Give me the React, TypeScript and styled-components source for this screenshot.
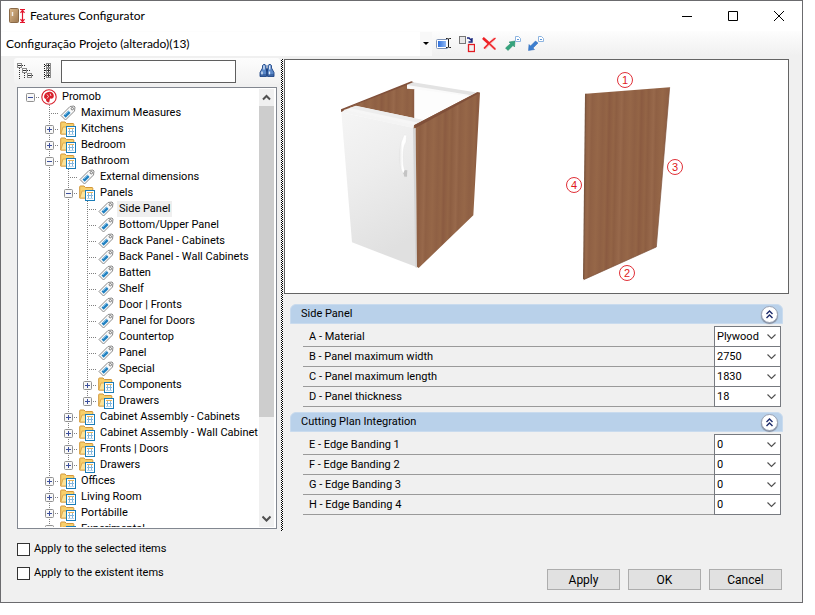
import React from "react";
import styled, { createGlobalStyle, css } from "styled-components";

const GlobalStyle = createGlobalStyle`
  *, *::before, *::after { box-sizing: border-box; }
  body {
    margin: 0;
    background: #fff;
    color: #000;
    font: 11px/16px Roboto, "Liberation Sans", sans-serif;
  }
  button, input, select { font: inherit; color: inherit; }
  svg { display: block; }
`;

const line = "#777a80";
const captionFont = `12px/16px Lato, "Open Sans", sans-serif`;
const dotsV = "repeating-linear-gradient(to bottom, #808080 0 1px, transparent 1px 2px)";
const dotsH = "repeating-linear-gradient(to right, #808080 0 1px, transparent 1px 2px)";

const Dialog = styled.main`
  display: flex;
  flex-direction: column;
  height: calc(100vh - 12px);
  min-height: 480px;
  margin-right: 12px;
  background: #f0f0f0;
  border: 1px solid #6b6b6e;
`;

const TitleBar = styled.header`
  display: flex;
  flex: none;
  align-items: center;
  height: 30px;
  padding-left: 8px;
  background: #fff;
`;

const Title = styled.h1`
  flex: 1;
  margin: 0 0 0 4px;
  font: ${captionFont};
`;

const WindowButton = styled.button`
  display: grid;
  place-items: center;
  width: 46px;
  height: 28px;
  padding: 0;
  border: 0;
  background: none;
`;

const Toolbar = styled.div`
  display: flex;
  flex: none;
  align-items: center;
  gap: 7px;
  height: 25px;
  background: linear-gradient(#fdfdfd, #f0f0f0);
`;

const ProjectPicker = styled.label`
  display: grid;
  flex: 0 1 431px;
  align-items: center;
  height: 24px;
  margin-right: -3px;
  background: #fff;
`;

const ProjectSelect = styled.select`
  grid-area: 1 / 1;
  width: 100%;
  height: 24px;
  padding: 0 16px 0 5px;
  border: 0;
  appearance: none;
  background: none;
  font: ${captionFont};
`;

const PickerArrow = styled.span`
  display: grid;
  grid-area: 1 / 1;
  place-items: center;
  justify-self: end;
  width: 12px;
  height: 24px;
  background: #f8f8f8;
  pointer-events: none;
`;

const IconButton = styled.button`
  display: grid;
  place-items: center;
  flex: none;
  width: 16px;
  height: 18px;
  padding: 0;
  border: 0;
  background: none;
`;

const Body = styled.div`
  display: flex;
  flex: 1;
  min-height: 0;
  padding-right: 13px;
`;

const Sidebar = styled.aside`
  display: flex;
  flex: none;
  flex-direction: column;
  width: 280px;
  padding: 2px 4px 2px 16px;
`;

const SearchBar = styled.div`
  display: flex;
  flex: none;
  align-items: center;
  gap: 6px;
  height: 26px;
  margin: 0 -3px 3px;
  padding: 0 5px 0 3px;
  border-radius: 3px;
  background: linear-gradient(#fdfdfd, #f2f2f2);
`;

const SearchInput = styled.input`
  flex: 1;
  min-width: 0;
  height: 23px;
  margin-right: 17px;
  padding: 0 4px;
  border: 1px solid #5f5f5f;
  background: #fff;
`;

const TreeBox = styled.div`
  display: flex;
  flex: 1;
  min-height: 0;
  padding: 1px 2px 1px 3px;
  border: 1px solid #828790;
  background: #fff;
`;

const TreeList = styled.ul`
  flex: 1;
  min-width: 0;
  margin: 0;
  padding: 0;
  overflow: hidden;
  list-style: none;
`;

const TreeRow = styled.li`
  display: flex;
  align-items: center;
  height: 16px;
  white-space: nowrap;
`;

const Guide = styled.span<{ $line: boolean }>`
  flex: none;
  width: 19px;
  height: 16px;
  ${(p) => p.$line && css`background: ${dotsV} 9px 0 / 1px 16px no-repeat;`}
`;

const Branch = styled.span<{ $line: boolean; $last: boolean }>`
  display: grid;
  place-items: center;
  flex: none;
  width: 19px;
  height: 16px;
  background:
    ${dotsH} 9px 8px / 10px 1px no-repeat,
    ${dotsV} 9px 0 / ${(p) => (p.$line ? 1 : 0)}px ${(p) => (p.$last ? 8 : 16)}px no-repeat;
`;

const Expander = styled.button`
  width: 9px;
  height: 9px;
  padding: 0;
  border: 0;
  background: none;
`;

const TreeIcon = styled.span`
  flex: none;
  width: 16px;
  margin: 0 3px 0 1px;
`;

const TreeLabel = styled.span<{ $selected: boolean }>`
  padding: 0 2px;
  background: ${(p) => (p.$selected ? "#efefef" : "none")};
`;

const ScrollBar = styled.div`
  display: flex;
  flex: none;
  flex-direction: column;
  width: 15px;
  background: #f0f0f0;
`;

const ScrollButton = styled.button`
  display: grid;
  place-items: center;
  flex: none;
  width: 15px;
  height: 17px;
  padding: 0;
  border: 0;
  background: none;
`;

const ScrollTrack = styled.div`
  flex: 1;
`;

const ScrollThumb = styled.div`
  height: 77%;
  background: #cdcdcd;
`;

const Splitter = styled.div`
  flex: none;
  width: 2px;
  margin: 3px 1px 0 0;
  background: repeating-conic-gradient(#000 0 25%, #fff 0 50%) 0 0 / 2px 2px;
`;

const Content = styled.section`
  flex: 1;
  min-width: 0;
  padding-top: 3px;
`;

const Preview = styled.figure`
  margin: 0 0 10px;
  border: 1px solid #646464;
  background: #fff;
  overflow: hidden;
`;

const Group = styled.section`
  margin: 0 6px 5px;
`;

const GroupHeader = styled.header`
  display: flex;
  align-items: center;
  justify-content: space-between;
  height: 20px;
  margin-bottom: 2px;
  padding: 0 4px 0 10px;
  border: 1px solid #c9dbee;
  border-radius: 6px 6px 0 0;
  background: #b9d1ea;
`;

const GroupTitle = styled.h2`
  margin: 0;
  font: inherit;
`;

const CollapseButton = styled.button`
  display: grid;
  place-items: center;
  width: 17px;
  height: 17px;
  padding: 0;
  border: 1px solid #9aa3b5;
  border-radius: 50%;
  background: #fff;
  box-shadow: 0 1px 1px #7d8799;
`;

const Fields = styled.div`
  margin: 0 2px 0 13px;
`;

const Field = styled.div`
  display: flex;
  align-items: stretch;
  height: 20px;
  &:first-child { height: 21px; }
`;

const FieldLabel = styled.label`
  flex: 1;
  align-content: center;
  padding: 1px 0 0 6px;
  border-bottom: 1px solid #9a9a9a;
`;

const ValueBox = styled.span`
  display: grid;
  flex: none;
  align-items: center;
  width: 67px;
  border: solid ${line};
  border-width: 0 1px 1px;
  background: #fff;
  ${Field}:first-child & { border-top-width: 1px; }
`;

const ValueSelect = styled.select`
  grid-area: 1 / 1;
  width: 100%;
  height: 19px;
  padding: 0 0 0 2px;
  border: 0;
  appearance: none;
  background: none;
`;

const ValueArrow = styled.span`
  grid-area: 1 / 1;
  justify-self: end;
  margin-right: 4px;
  pointer-events: none;
`;

const Footer = styled.footer`
  display: flex;
  flex: none;
  justify-content: space-between;
  padding: 6px 20px 12px 16px;
`;

const Options = styled.div`
  display: flex;
  flex-direction: column;
  padding-bottom: 5px;
`;

const Option = styled.label`
  display: flex;
  align-items: center;
  gap: 4px;
  height: 24px;
`;

const CheckBox = styled.input`
  width: 13px;
  height: 13px;
  margin: 0;
  border: 1px solid #333;
  appearance: none;
  background: #fff;
  &:checked { box-shadow: inset 0 0 0 2px #fff; background: #333; }
`;

const Actions = styled.div`
  display: flex;
  align-items: flex-end;
  gap: 8px;
`;

const ActionButton = styled.button`
  width: 73px;
  height: 21px;
  padding: 0;
  border: 1px solid #adadad;
  background: #e1e1e1;
  font-size: 12px;
`;

const AppIcon = () => (
  <svg width="17" height="18" viewBox="0 0 17 18" aria-hidden="true">
    <defs>
      <linearGradient id="door" x2="1" y2="1">
        <stop offset="0" stopColor="#dcb98c" />
        <stop offset="1" stopColor="#9c7850" />
      </linearGradient>
    </defs>
    <rect x=".5" y="1.5" width="9" height="14" rx="1" fill="url(#door)" stroke="#8a6a48" />
    <path d="M3.5 5v4" stroke="#f2eee8" strokeWidth="1.4" />
    <path d="M11 2.500h5M11 15.500h5M13.500 3v12M11.500 5.800 13.500 3.200l2 2.600M11.500 12.200 13.500 14.800l2-2.600" fill="none" stroke="#e3142c" strokeWidth="1.2" />
  </svg>
);

const RenameIcon = () => (
  <svg width="16" height="16" viewBox="0 0 16 16" aria-hidden="true">
    <defs>
      <linearGradient id="rename" x2="1">
        <stop offset="0" stopColor="#2f70dc" />
        <stop offset="1" stopColor="#8fb8f4" />
      </linearGradient>
    </defs>
    <path d="M11.500 3.500H1.500q-1 0-1 1v7q0 1 1 1h10" fill="#fff" stroke="#7d92b5" />
    <rect x="2" y="5" width="8" height="6" fill="url(#rename)" />
    <path d="M10 2.500h1.500q1 0 1 1 0-1 1-1H15M10 11.500h1.500q1 0 1-1 0 1 1 1H15M12.500 3v8" fill="none" stroke="#222" />
  </svg>
);

const ReplaceIcon = () => (
  <svg width="16" height="18" viewBox="0 0 16 18" aria-hidden="true">
    <rect x=".5" y="1.500" width="6" height="7" fill="#e8e8e8" stroke="#777" />
    <path d="M8 3h2l2.500 2.500M13 3v4H9.500" fill="none" stroke="#17257c" strokeWidth="1.400" />
    <rect x="9.500" y="9.500" width="6" height="7" fill="#f1f1f1" stroke="#e11b22" strokeWidth="1.300" />
  </svg>
);

const DeleteIcon = () => (
  <svg width="16" height="16" viewBox="0 0 16 16" aria-hidden="true">
    <path d="M2 3 13 13M12.500 2.500 2.500 12.500" stroke="#f9b4b4" strokeWidth="2.500" />
    <path d="M1 2Q7 7 13.500 13.500" fill="none" stroke="#ee2126" strokeWidth="1.500" />
    <path d="M13.500 2Q7 6.500 2 12.500" fill="none" stroke="#ee2126" strokeWidth="1.400" />
    <path d="M1 2 7 7.500" stroke="#ee2126" strokeWidth="2.500" />
  </svg>
);

const PageMark = () => (
  <>
    <path d="M10.500 .5h3l2 2v3h-5z" fill="#fff" stroke="#8db4e0" />
    <path d="M12 3.500h2" stroke="#5f96d4" />
  </>
);

const ExportIcon = () => (
  <svg width="16" height="16" viewBox="0 0 16 16" aria-hidden="true">
    <path d="M.5 12 5.500 7.500 4 6 10 5 9.500 11 8 9.500 3 14.500z" fill="#34a47c" stroke="#238764" strokeWidth=".5" />
    <PageMark />
  </svg>
);

const ImportIcon = () => (
  <svg width="16" height="16" viewBox="0 0 16 16" aria-hidden="true">
    <path d="M.5 14.500 1 8.500 2.500 10 7.500 5 10 7 5 12 6.500 13.500z" fill="#3c7fd0" stroke="#2c67b6" strokeWidth=".5" />
    <PageMark />
  </svg>
);

const MiniBox = ({ x, y, plus }: { x: number; y: number; plus?: boolean }) => (
  <g>
    <rect x={x + 0.5} y={y + 0.5} width="4" height="4" fill="#fff" stroke="#8b8b8b" />
    <path d={`M${x + 1} ${y + 2.5}h3${plus ? `M${x + 2.5} ${y + 1}v3` : ""}`} stroke="#333" />
  </g>
);

const CollapseTreeIcon = () => (
  <svg width="16" height="18" viewBox="0 0 16 18" aria-hidden="true">
    <path d="M2.500 6v11M5 3.500h3M7.500 11v6M10 8.500h3M13 13.500h3" stroke="#333" strokeDasharray="1 1" />
    <MiniBox x={0} y={1} />
    <MiniBox x={5} y={6} />
    <MiniBox x={10} y={11} />
  </svg>
);

const ExpandTreeIcon = () => (
  <svg width="12" height="18" viewBox="0 0 12 18" aria-hidden="true">
    <path d="M3.500 2v15" stroke="#111" strokeWidth="1" strokeDasharray="1 1" />
    <path d="M4 3.500h2M4 8.500h2M4 13.500h2" stroke="#333" />
    <MiniBox x={5} y={1} plus />
    <MiniBox x={5} y={6} plus />
    <MiniBox x={5} y={11} plus />
  </svg>
);

const BinocularsIcon = () => (
  <svg width="16" height="16" viewBox="0 0 16 16" aria-hidden="true">
    <g fill="#5a88c8" stroke="#1e4484" strokeWidth=".9">
      <path d="M3.500 5V2.500L4.500 1.500H6L7 2.500V5L7.500 8v5.500h-6.500v-4z" />
      <path d="M12.500 5V2.500L11.500 1.500H10L9 2.500V5L8.500 8v5.500h6.500v-4z" />
    </g>
    <path d="M7 5.500h2v3H7z" fill="#1e4484" />
    <path d="M5 2.500v4M10.700 2.500v4M3 8.500v3.500M10.500 8.500v3.500" stroke="#e4eefb" strokeWidth="1.300" />
    <path d="M1 12h6.500M8.500 12H15" stroke="#1e4484" />
  </svg>
);

const PromobIcon = () => (
  <svg width="16" height="16" viewBox="0 0 16 16" aria-hidden="true">
    <circle cx="8" cy="8" r="7.200" fill="#fff" stroke="#d8202c" strokeWidth="1.100" />
    <path d="M7.500 3C9.500 2 12.500 3.200 12.800 6.500 13 9 11 10.200 9 9.600L8.200 13.500C6 13.500 4.800 12 5 10.200L3.300 9C2.500 6 4.500 3.500 7.500 3z" fill="#d8202c" />
    <path d="M6 5.500 7.500 7.500 6 9.500M9 4.500 10 7" fill="none" stroke="#fff" strokeWidth=".8" />
  </svg>
);

const FolderIcon = () => (
  <svg width="16" height="16" viewBox="0 0 16 16" aria-hidden="true">
    <path d="M.7 13V1.800Q.7 1 1.500 1H5l1.500 1.500H13q.8 0 .8.800V13z" fill="#f7cf6b" stroke="#d2973b" />
    <path d="M.8 13 3 6h12l-2 7z" fill="#fce39a" stroke="#d9a144" strokeWidth=".8" />
    <rect x="6.500" y="5.500" width="9" height="10" fill="#fff" stroke="#1a7cb8" />
    <path d="M8 7.500h6" stroke="#e9b45a" />
    <path d="M8 10.500h6M9.500 8v6M12.500 8v6" stroke="#84b7dd" />
    <path d="M8 13.500h6" stroke="#bcd8ec" />
  </svg>
);

const TagIcon = () => (
  <svg width="16" height="16" viewBox="0 0 16 16" aria-hidden="true">
    <path d="M1 10.500 10 1.500 14 1 15 2 14.500 6 5.500 15z" fill="#fafafa" stroke="#8a8a8a" />
    <path d="M3.500 10.500 8.500 5.500 10.500 8 5.700 12.700z" fill="#2080c0" />
    <path d="M5 10 9 6" stroke="#8ac6ec" strokeWidth=".8" />
    <circle cx="12.300" cy="3.700" r="1.200" fill="#fff" stroke="#777" />
  </svg>
);

const ChevronIcon = ({ up, bold }: { up?: boolean; bold?: boolean }) => (
  <svg width="9" height="7" viewBox="0 0 9 7" aria-hidden="true">
    <path d={up ? "M1 5.500 4.500 2 8 5.500" : "M.5 1.500 4.500 5.500 8.500 1.500"} fill="none" stroke="#505050" strokeWidth={bold ? 2 : 1.1} />
  </svg>
);

const DoubleChevronIcon = () => (
  <svg width="9" height="9" viewBox="0 0 9 9" aria-hidden="true">
    <path d="M1.500 4 4.500 1 7.500 4M1.500 8 4.500 5 7.500 8" fill="none" stroke="#1d2b6b" strokeWidth="1.400" />
  </svg>
);

const marks = [
  { n: 1, x: 340, y: 20 },
  { n: 2, x: 342, y: 213 },
  { n: 3, x: 390, y: 107 },
  { n: 4, x: 289, y: 125 },
];

const CabinetDrawing = () => (
  <svg width="503" height="233" viewBox="0 0 503 233" role="img" aria-label="Cabinet and side panel edges">
    <defs>
      <linearGradient id="wood" gradientUnits="userSpaceOnUse" x1="0" x2="96" y1="0" y2="2" spreadMethod="repeat">
        <stop offset="0" stopColor="#8f6044" />
        <stop offset=".12" stopColor="#946546" />
        <stop offset=".2" stopColor="#8b5b41" />
        <stop offset=".34" stopColor="#946546" />
        <stop offset=".42" stopColor="#8d5e42" />
        <stop offset=".58" stopColor="#98694b" />
        <stop offset=".66" stopColor="#8f6044" />
        <stop offset=".85" stopColor="#966748" />
        <stop offset="1" stopColor="#8f6044" />
      </linearGradient>
      <linearGradient id="front" x2=".3" y2="1">
        <stop offset="0" stopColor="#f5f5f5" />
        <stop offset=".45" stopColor="#ededed" />
        <stop offset="1" stopColor="#e0e0e0" />
      </linearGradient>
      <linearGradient id="handle" x2="1">
        <stop offset="0" stopColor="#e6e6e6" />
        <stop offset=".4" stopColor="#fff" />
      </linearGradient>
    </defs>
    <g transform="scale(.33333) translate(-15 0)">
      <path d="M183 150 396 65 404 86V182L225 142 186 157z" fill="url(#wood)" />
      <path d="M183 148 394 64 402 67 215 139 192 149V156H184z" fill="#80503a" />
      <path d="M403 88 570 108 420 190 403 178z" fill="#fdfdfd" />
      <path d="M381 74 399 67 595 98 566 107 382 80z" fill="#e3e3e3" />
      <path d="M381 75 566 104V108L404 88 381 86z" fill="#fafafa" />
      <path d="M192 150 228 137 430 180 404 195z" fill="#f6f6f6" />
      <path d="M228 138 430 180 414 188 208 144z" fill="#ededed" />
      <path d="M184 157 403 204 411 622 216 547z" fill="url(#front)" />
      <path d="M184 157 194 149 404 194 403 205z" fill="#f4f4f4" />
      <path d="M399 204 407 204 412 623 406 622z" fill="#d4d4d4" />
      <path d="M402 196 592 97 600 98 580 466 416 624 411 620 407 204 401 205z" fill="url(#wood)" />
      <path d="M402 196 592 97 600 98 407 204z" fill="#80503a" />
      <path d="M372 225 380 226 378 246Q369 260 369 290T374 330L382 332 381 350H373L368 337Q357 320 358 285T367 239z" fill="url(#handle)" stroke="#e2e2e2" strokeWidth="1" />
      <path d="M374 330 382 331 381 350H373L370 340z" fill="#c4c4c4" />
    </g>
    <g transform="translate(255 0) scale(.33333)">
      <path d="M137 101 389 82 349 561 131 659z" fill="url(#wood)" />
      <path d="M137 101 131 657" stroke="#7b563f" strokeWidth="4" />
      <path d="M389 82 349 561 131 659" fill="none" stroke="#7a4e38" strokeWidth="2" />
    </g>
    {marks.map((m) => (
      <g key={m.n}>
        <circle cx={m.x} cy={m.y} r="7.500" fill="#fff" stroke="#e03038" />
        <text x={m.x} y={m.y + 4} textAnchor="middle" fontFamily="Liberation Sans, sans-serif" fontSize="11" fill="#e01820">
          {m.n}
        </text>
      </g>
    ))}
  </svg>
);

type Kind = "root" | "folder" | "tag";
type Node = { text: string; level: number; kind: Kind; open?: boolean; last?: boolean };

const tag = (text: string, level: number): Node => ({ text, level, kind: "tag" });
const folder = (text: string, level: number, extra: Partial<Node> = {}): Node => ({ text, level, kind: "folder", ...extra });

const nodes: Node[] = [
  { text: "Promob", level: 0, kind: "root", open: true },
  tag("Maximum Measures", 1),
  folder("Kitchens", 1),
  folder("Bedroom", 1),
  folder("Bathroom", 1, { open: true }),
  tag("External dimensions", 2),
  folder("Panels", 2, { open: true }),
  tag("Side Panel", 3),
  tag("Bottom/Upper Panel", 3),
  tag("Back Panel - Cabinets", 3),
  tag("Back Panel - Wall Cabinets", 3),
  tag("Batten", 3),
  tag("Shelf", 3),
  tag("Door | Fronts", 3),
  tag("Panel for Doors", 3),
  tag("Countertop", 3),
  tag("Panel", 3),
  tag("Special", 3),
  folder("Components", 3),
  folder("Drawers", 3, { last: true }),
  folder("Cabinet Assembly - Cabinets", 2),
  folder("Cabinet Assembly - Wall Cabinet", 2),
  folder("Fronts | Doors", 2),
  folder("Drawers", 2, { last: true }),
  folder("Offices", 1),
  folder("Living Room", 1),
  folder("Portábille", 1),
  folder("Experimental", 1),
];

const treeIcons = { root: PromobIcon, folder: FolderIcon, tag: TagIcon };

const TreeItem = ({ node }: { node: Node }) => {
  const Icon = treeIcons[node.kind];
  const selected = node.text === "Side Panel";
  return (
    <TreeRow role="treeitem" aria-level={node.level + 1} aria-expanded={node.kind === "tag" ? undefined : !!node.open} aria-selected={selected}>
      {Array.from({ length: node.level }, (_, i) => (
        <Guide key={i} $line={i > 0} />
      ))}
      <Branch $line={node.level > 0} $last={!!node.last}>
        {node.kind !== "tag" && (
          <Expander aria-label={`${node.open ? "Collapse" : "Expand"} ${node.text}`}>
            <svg width="9" height="9" viewBox="0 0 9 9" aria-hidden="true">
              <rect x=".5" y=".5" width="8" height="8" rx="1" fill="#f8f8f8" stroke="#919191" />
              <path d={node.open ? "M2 4.500h5" : "M2 4.500h5M4.500 2v5"} stroke="#3c4f9c" />
            </svg>
          </Expander>
        )}
      </Branch>
      <TreeIcon><Icon /></TreeIcon>
      <TreeLabel $selected={selected}>{node.text}</TreeLabel>
    </TreeRow>
  );
};

const groups = [
  {
    title: "Side Panel",
    fields: [
      ["A - Material", "Plywood"],
      ["B - Panel maximum width", "2750"],
      ["C - Panel maximum length", "1830"],
      ["D - Panel thickness", "18"],
    ],
  },
  {
    title: "Cutting Plan Integration",
    fields: [
      ["E - Edge Banding 1", "0"],
      ["F - Edge Banding 2", "0"],
      ["G - Edge Banding 3", "0"],
      ["H - Edge Banding 4", "0"],
    ],
  },
];

const tools = [
  { name: "Rename", Icon: RenameIcon },
  { name: "Replace", Icon: ReplaceIcon },
  { name: "Delete", Icon: DeleteIcon },
  { name: "Export", Icon: ExportIcon },
  { name: "Import", Icon: ImportIcon },
];

const windowControls = [
  { name: "Minimize", d: "M0 5.500h10" },
  { name: "Maximize", d: "M.5.500h9v9h-9z" },
  { name: "Close", d: "M0 0 10 10M10 0 0 10" },
];

export default function App() {
  return (
    <>
      <GlobalStyle />
      <Dialog>
        <TitleBar>
          <AppIcon />
          <Title>Features Configurator</Title>
          {windowControls.map((c) => (
            <WindowButton key={c.name} aria-label={c.name}>
              <svg width="10" height="10" viewBox="0 0 10 10" aria-hidden="true">
                <path d={c.d} fill="none" stroke="#000" />
              </svg>
            </WindowButton>
          ))}
        </TitleBar>
        <Toolbar>
          <ProjectPicker>
            <ProjectSelect aria-label="Project configuration">
              <option>Configuração Projeto (alterado)(13)</option>
            </ProjectSelect>
            <PickerArrow>
              <svg width="6" height="3" viewBox="0 0 6 3" aria-hidden="true"><path d="M0 0h6L3 3z" /></svg>
            </PickerArrow>
          </ProjectPicker>
          {tools.map(({ name, Icon }) => (
            <IconButton key={name} aria-label={name}><Icon /></IconButton>
          ))}
        </Toolbar>
        <Body>
          <Sidebar>
            <SearchBar>
              <IconButton aria-label="Collapse all"><CollapseTreeIcon /></IconButton>
              <IconButton aria-label="Expand all"><ExpandTreeIcon /></IconButton>
              <SearchInput aria-label="Search" />
              <IconButton aria-label="Find"><BinocularsIcon /></IconButton>
            </SearchBar>
            <TreeBox>
              <TreeList role="tree" aria-label="Features">
                {nodes.map((n, i) => <TreeItem key={i} node={n} />)}
              </TreeList>
              <ScrollBar>
                <ScrollButton aria-label="Scroll up"><ChevronIcon up bold /></ScrollButton>
                <ScrollTrack><ScrollThumb /></ScrollTrack>
                <ScrollButton aria-label="Scroll down"><ChevronIcon bold /></ScrollButton>
              </ScrollBar>
            </TreeBox>
          </Sidebar>
          <Splitter />
          <Content>
            <Preview><CabinetDrawing /></Preview>
            {groups.map((g) => (
              <Group key={g.title}>
                <GroupHeader>
                  <GroupTitle>{g.title}</GroupTitle>
                  <CollapseButton aria-label={`Collapse ${g.title}`}><DoubleChevronIcon /></CollapseButton>
                </GroupHeader>
                <Fields>
                  {g.fields.map(([label, value]) => (
                    <Field key={label}>
                      <FieldLabel htmlFor={label[0]}>{label}</FieldLabel>
                      <ValueBox>
                        <ValueSelect id={label[0]}><option>{value}</option></ValueSelect>
                        <ValueArrow><ChevronIcon /></ValueArrow>
                      </ValueBox>
                    </Field>
                  ))}
                </Fields>
              </Group>
            ))}
          </Content>
        </Body>
        <Footer>
          <Options>
            <Option><CheckBox type="checkbox" />Apply to the selected items</Option>
            <Option><CheckBox type="checkbox" />Apply to the existent items</Option>
          </Options>
          <Actions>
            <ActionButton>Apply</ActionButton>
            <ActionButton>OK</ActionButton>
            <ActionButton>Cancel</ActionButton>
          </Actions>
        </Footer>
      </Dialog>
    </>
  );
}
